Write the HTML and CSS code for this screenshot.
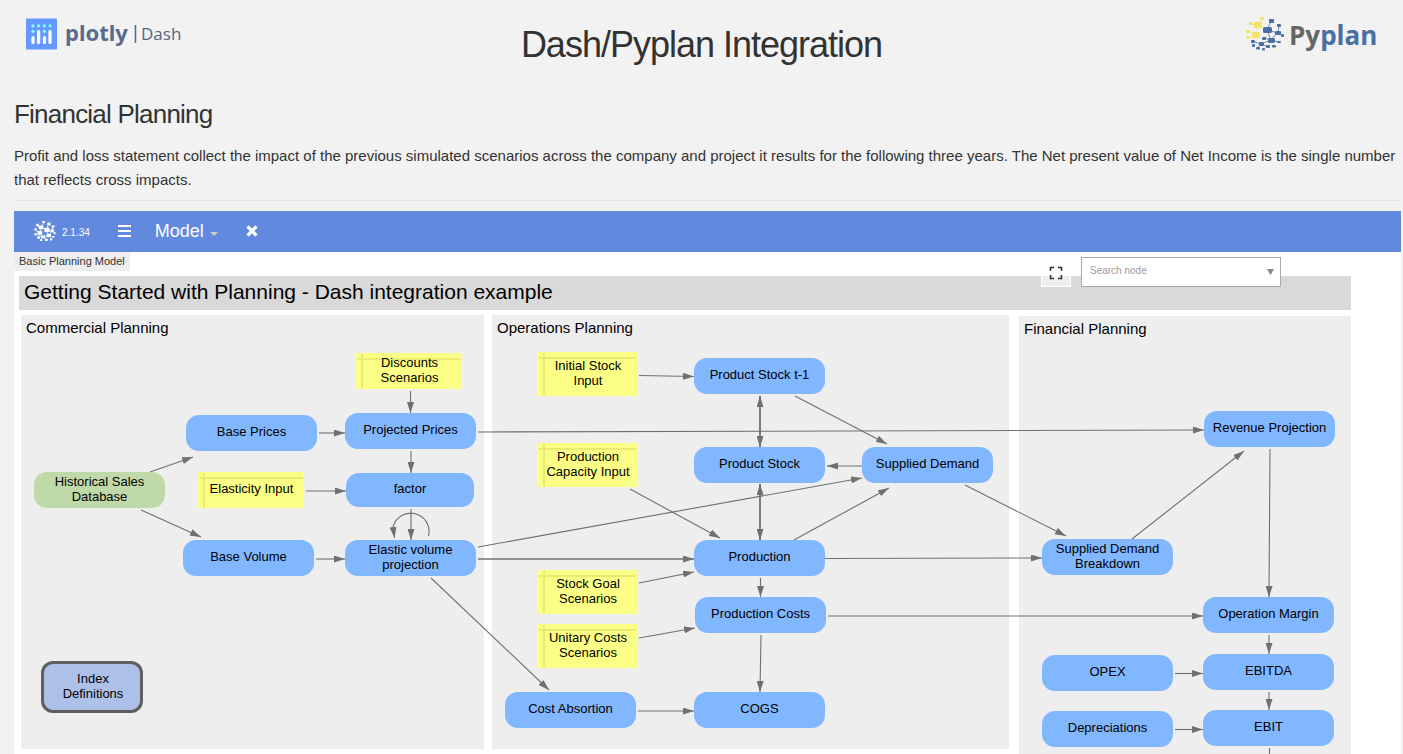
FILE: index.html
```html
<!DOCTYPE html>
<html lang="en">
<head>
<meta charset="utf-8">
<title>Dash/Pyplan Integration</title>
<link rel="stylesheet" href="styles.css">
</head>
<body>
<header class="page-header">
  <svg class="logo-dash" width="160" height="36" viewBox="0 0 160 36" role="img" aria-label="plotly Dash">
    <rect x="0" y="2.500" width="31" height="31" rx="1" fill="#6699ff"/>
    <g fill="#80ffff"><circle cx="7" cy="9.800" r="1.600"/><circle cx="12.600" cy="9.800" r="1.600"/><circle cx="18.400" cy="9.800" r="1.600"/><circle cx="24" cy="9.800" r="1.600"/><circle cx="7" cy="15.300" r="1.600"/><circle cx="18.400" cy="15.300" r="1.600"/></g>
    <g stroke="#fff" stroke-width="3.200" stroke-linecap="round"><path d="M7 21.500v5M12.600 15.500v11M18.400 21.500v5M24 15.500v11"/></g>
    <text class="logo-plotly" x="39" y="25">plotly</text>
    <path d="M109.500 9v18" stroke="#506784" stroke-width="1.500"/>
    <text class="logo-product" x="115" y="24">Dash</text>
  </svg>
  <h1 class="page-title">Dash/Pyplan Integration</h1>
  <svg class="logo-pyplan" width="138" height="40" viewBox="0 0 138 40" role="img" aria-label="Pyplan">
    <g stroke="#4a6fa5" stroke-width=".8" fill="none"><path d="M22 14L26 5M22 14L33 17L34 9M22 14L26 24L32 17L37 19M26 24L16 28L7 25M26 24L34 26M16 28L12 32M16 28L23 31M19 22L26 24"/></g>
    <g stroke="#f2e363" stroke-width=".8" fill="none"><path d="M17 3L13 9L6 8M13 9L11 19L3 15M11 19L3 22M13 9L22 14"/></g>
    <g fill="#f2e363"><rect x="9" y="6" width="8" height="6" rx="1.500"/><rect x="7" y="16" width="8" height="6" rx="1.500"/><rect x="15" y="1" width="4" height="3" rx="1"/><rect x="4" y="6" width="4" height="3" rx="1"/><rect x="1" y="14" width="4" height="3" rx="1"/><rect x="1" y="20" width="4" height="3" rx="1"/></g>
    <g fill="#4a6fa5"><rect x="18" y="11" width="9" height="6" rx="1.500"/><rect x="24" y="3" width="5" height="4" rx="1"/><rect x="32" y="8" width="4" height="3" rx="1"/><rect x="30" y="15" width="6" height="4" rx="1"/><rect x="23" y="22" width="7" height="5" rx="1.500"/><rect x="36" y="18" width="3" height="3" rx="1"/><rect x="17" y="21" width="4" height="3" rx="1"/><rect x="14" y="26" width="5" height="4" rx="1"/><rect x="6" y="24" width="4" height="3" rx="1"/><rect x="7" y="28" width="3" height="3" rx="1"/><rect x="11" y="31" width="4" height="2.500" rx="1"/><rect x="17" y="32" width="3" height="2.500" rx="1"/><rect x="21" y="29" width="4" height="3" rx="1"/><rect x="27" y="29" width="4" height="2.500" rx="1"/><rect x="32" y="25" width="4" height="2" rx="1"/></g>
    <text class="logo-pyplan-text" x="44" y="29" fill="#666">Py<tspan fill="#4a6fa5">plan</tspan></text>
  </svg>
</header>

<main class="content">
  <h2 class="section-title">Financial Planning</h2>
  <p class="intro">Profit and loss statement collect the impact of the previous simulated scenarios across the company and project it results for the following three years. The Net present value of Net Income is the single number that reflects cross impacts.</p>
  <hr class="divider">

  <section class="model">
    <nav class="toolbar">
      <svg class="toolbar-logo" width="22" height="20" viewBox="0 0 38 36" aria-hidden="true">
        <path d="M16 5L12 11L5 10M12 11L10 21L2 17M10 21L2 24M12 11L21 16L25 7M21 16L32 19L33 11M21 16L25 26L31 19L36 21M25 26L15 29L6 27M10 21L15 29L11 34M15 29L22 33" fill="none" stroke="#fff" stroke-width="1.500"/>
        <g fill="#fff"><rect x="8" y="8" width="8" height="7" rx="1"/><rect x="6" y="18" width="8" height="7" rx="1"/><rect x="14" y="0" width="5" height="4"/><rect x="3" y="5" width="5" height="4"/><rect x="0" y="13" width="4" height="4"/><rect x="0" y="22" width="4" height="4"/><rect x="18" y="12" width="9" height="8" rx="1"/><rect x="23" y="3" width="6" height="5"/><rect x="31" y="8" width="5" height="4"/><rect x="29" y="15" width="6" height="5"/><rect x="22" y="23" width="8" height="6"/><rect x="35" y="20" width="3" height="4"/><rect x="13" y="26" width="6" height="5"/><rect x="5" y="28" width="5" height="4"/><rect x="10" y="33" width="4" height="3"/><rect x="19" y="32" width="5" height="4"/><rect x="28" y="31" width="4" height="4"/><rect x="32" y="27" width="4" height="3"/></g>
      </svg>
      <span class="version">2.1.34</span>
      <button class="icon-button menu-button" type="button" aria-label="Menu">
        <svg width="13" height="12" viewBox="0 0 13 12"><path d="M0 1h13M0 6h13M0 11h13" stroke="#fff" stroke-width="2"/></svg>
      </button>
      <button class="model-button" type="button">Model <span class="caret"></span></button>
      <button class="icon-button close-button" type="button" aria-label="Close">
        <svg width="12" height="12" viewBox="0 0 12 12"><path d="M1.500 1.500l9 9M10.500 1.500l-9 9" stroke="#fff" stroke-width="3.200"/></svg>
      </button>
    </nav>

    <div class="canvas">
      <span class="breadcrumb">Basic Planning Model</span>
      <div class="item banner">Getting Started with Planning - Dash integration example</div>
      <div class="item area area-commercial">Commercial Planning</div>
      <div class="item area area-operations">Operations Planning</div>
      <div class="item area area-financial">Financial Planning</div>

      <svg class="edges" width="1387" height="520" aria-hidden="true">
        <defs>
          <marker id="arrow" viewBox="0 0 11 7" markerWidth="11" markerHeight="7" refX="11" refY="3.500" markerUnits="userSpaceOnUse" orient="auto-start-reverse"><path d="M0 0L11 3.500L0 7z" fill="#707070"/></marker>
        </defs>
        <g transform="translate(-14 -252)" fill="none" stroke="#707070" stroke-width="1.100">
          <path marker-end="url(#arrow)" d="M410.500 391V413"/>
          <path marker-end="url(#arrow)" d="M319 433H345"/>
          <path marker-end="url(#arrow)" d="M411 451V473"/>
          <path marker-end="url(#arrow)" d="M306 491H346"/>
          <path marker-end="url(#arrow)" d="M150 472L193 457"/>
          <path marker-end="url(#arrow)" d="M141 510L201 537"/>
          <path marker-end="url(#arrow)" d="M316 559H345"/>
          <path marker-end="url(#arrow)" d="M411 509V540"/>
          <path marker-end="url(#arrow)" d="M428.500 536A18 18 0 1 0 393 527L394.500 538"/>
          <path marker-end="url(#arrow)" d="M478 432L1204 430"/>
          <path marker-end="url(#arrow)" d="M478 547L862 478"/>
          <path marker-end="url(#arrow)" stroke-width="1.600" d="M478 559H694"/>
          <path marker-end="url(#arrow)" d="M431 578L549 690"/>
          <path marker-end="url(#arrow)" d="M639 375.500L694 376.500"/>
          <path marker-end="url(#arrow)" d="M630 489L720 538"/>
          <path marker-end="url(#arrow)" d="M639 583L694 572"/>
          <path marker-end="url(#arrow)" d="M639 638L695 628"/>
          <path marker-end="url(#arrow)" d="M638 711H694"/>
          <path marker-start="url(#arrow)" marker-end="url(#arrow)" stroke-width="1.800" d="M760 396V447"/>
          <path marker-start="url(#arrow)" marker-end="url(#arrow)" stroke-width="1.800" d="M760 484V540"/>
          <path marker-end="url(#arrow)" d="M795 396L887 444"/>
          <path marker-end="url(#arrow)" d="M862 466H827"/>
          <path marker-end="url(#arrow)" d="M794 540L889 488"/>
          <path marker-end="url(#arrow)" d="M760.500 578V597"/>
          <path marker-end="url(#arrow)" d="M761 635L760 692"/>
          <path marker-end="url(#arrow)" d="M825 558.500L1042 558"/>
          <path marker-end="url(#arrow)" d="M828 616H1203"/>
          <path marker-end="url(#arrow)" d="M965 485L1066 536"/>
          <path marker-end="url(#arrow)" d="M1132 539L1244 451"/>
          <path marker-end="url(#arrow)" d="M1270 449L1269 597"/>
          <path marker-end="url(#arrow)" d="M1269 635V654"/>
          <path marker-end="url(#arrow)" d="M1269 692V710"/>
          <path marker-end="url(#arrow)" d="M1175 673.500H1203"/>
          <path marker-end="url(#arrow)" d="M1175 729.500H1203"/>
          <path marker-end="url(#arrow)" d="M1269.500 748V767"/>
        </g>
      </svg>

      <div class="item node source historical-sales">Historical Sales Database</div>
      <div class="item node base-prices">Base Prices</div>
      <div class="item node projected-prices">Projected Prices</div>
      <div class="item node factor">factor</div>
      <div class="item node base-volume">Base Volume</div>
      <div class="item node elastic-volume">Elastic volume projection</div>
      <div class="item node product-stock-prev">Product Stock t-1</div>
      <div class="item node product-stock">Product Stock</div>
      <div class="item node supplied-demand">Supplied Demand</div>
      <div class="item node production">Production</div>
      <div class="item node production-costs">Production Costs</div>
      <div class="item node cost-absortion">Cost Absortion</div>
      <div class="item node cogs">COGS</div>
      <div class="item node demand-breakdown">Supplied Demand Breakdown</div>
      <div class="item node revenue">Revenue Projection</div>
      <div class="item node operation-margin">Operation Margin</div>
      <div class="item node opex">OPEX</div>
      <div class="item node ebitda">EBITDA</div>
      <div class="item node depreciations">Depreciations</div>
      <div class="item node ebit">EBIT</div>
      <div class="item note discounts">Discounts Scenarios</div>
      <div class="item note elasticity">Elasticity Input</div>
      <div class="item note tall initial-stock">Initial Stock Input</div>
      <div class="item note tall capacity">Production Capacity Input</div>
      <div class="item note tall stock-goal">Stock Goal Scenarios</div>
      <div class="item note tall unitary-costs">Unitary Costs Scenarios</div>
      <div class="item index-box">Index Definitions</div>

      <div class="canvas-tools">
        <button class="expand-button" type="button" aria-label="Full screen">
          <svg width="14" height="14" viewBox="0 0 14 14"><path d="M1.500 5V1.500H5M9 1.500h3.500V5M12.500 9v3.500H9M5 12.500H1.500V9" fill="none" stroke="#333" stroke-width="1.500"/></svg>
        </button>
        <div class="search">
          <input class="search-input" type="text" placeholder="Search node" aria-label="Search node">
          <svg class="search-arrow" width="7" height="6" viewBox="0 0 7 6" aria-hidden="true"><path d="M0 0h7L3.500 6z" fill="#888"/></svg>
        </div>
      </div>
    </div>
  </section>
</main>
</body>
</html>
```

FILE: styles.css
```css
* { box-sizing: border-box; }

body {
  margin: 0;
  height: 100vh;
  display: flex;
  flex-direction: column;
  overflow: hidden;
  background: #f2f2f2;
  color: #323232;
  font-family: "Liberation Sans", Arial, sans-serif;
}

button { margin: 0; padding: 0; border: 0; background: none; font: inherit; color: inherit; }
svg { display: block; }

/* Header */
.page-header {
  display: grid;
  grid-template-columns: 1fr auto 1fr;
  align-items: start;
  padding: 16px 20px 0;
  flex: none;
}
.page-title {
  margin: 7px 0 0;
  font-size: 36px;
  line-height: 44px;
  font-weight: 400;
  letter-spacing: -1px;
}
.logo-dash { margin-left: 6px; }
.logo-pyplan { justify-self: end; }
.logo-plotly { font: 700 22px "Noto Sans", sans-serif; fill: #586b8c; }
.logo-product { font: 400 17px "Open Sans", sans-serif; fill: #506784; }
.logo-pyplan-text { font: 700 26px "Open Sans", sans-serif; }

/* Text */
.content {
  flex: 1;
  min-height: 0;
  display: flex;
  flex-direction: column;
  padding: 31px 2px 0 14px;
}
.section-title {
  margin: 0;
  font-size: 26px;
  line-height: 32px;
  font-weight: 400;
  letter-spacing: -0.03em;
}
.intro { margin: 14px 0 0; font-size: 15px; line-height: 24px; }
.divider { width: 100%; margin: 8px 0 10px; border: 0; border-top: 1px solid #e6e6e6; }

/* Model */
.model { flex: 1; min-height: 0; display: flex; flex-direction: column; background: #fff; }
.toolbar {
  flex: none;
  display: flex;
  align-items: center;
  height: 41px;
  padding: 0 20px 1px;
  background: #6189de;
  color: #fff;
}
.version { margin-left: 6px; padding-top: 3px; font-size: 10px; }
.menu-button { margin-left: 28px; }
.model-button { display: flex; align-items: center; gap: 6px; margin-left: 24px; padding-top: 1px; font-size: 18px; }
.caret { margin-top: 5px; border: 4px solid transparent; border-top-color: #ccc; border-bottom: 0; }
.close-button { margin-left: 28px; }

.canvas { position: relative; flex: 1; min-height: 0; overflow: hidden; }
.breadcrumb {
  display: inline-block;
  padding: 0 5px;
  background: #eee;
  font-size: 11px;
  line-height: 19px;
  vertical-align: top;
}

/* Diagram */
.item, .edges { position: absolute; }
.edges { left: 0; top: 0; }
.banner {
  left: 5px; top: 24px; width: 1332px; height: 34px;
  padding-left: 5px;
  background: #d9d9d9;
  color: #000;
  font-size: 21px;
  line-height: 32px;
}
.area { padding: 4px 5px; background: #eee; color: #000; font-size: 15px; line-height: 18px; }
.area-commercial { left: 7px; top: 63px; width: 463px; height: 434px; }
.area-operations { left: 478px; top: 63px; width: 517px; height: 434px; }
.area-financial { left: 1005px; top: 64px; width: 332px; height: 460px; }

.node, .note, .index-box {
  display: flex;
  align-items: center;
  justify-content: center;
  color: #000;
  font-size: 13px;
  line-height: 15px;
  text-align: center;
}
.node {
  width: 131px;
  height: 36px;
  padding: 0 12px 3px;
  border-radius: 13px;
  background: #80b7ff;
}
.source { background: #bfd9a9; }
.note {
  width: 106px;
  height: 36px;
  padding: 0 6px 3px 7px;
  background:
    linear-gradient(#e8eb70, #e8eb70) 1px 5px / calc(100% - 2px) 2px no-repeat,
    linear-gradient(#e8eb70, #e8eb70) 5px 1px / 2px calc(100% - 2px) no-repeat,
    #fcff85;
}
.note.tall { width: 99px; height: 44px; }
.index-box {
  left: 27px; top: 409px; width: 102px; height: 52px;
  padding: 0 12px 2px 14px;
  border: 3px solid #5f5f5f;
  border-radius: 12px;
  background: #adc0e8;
}

.historical-sales { left: 20px; top: 220px; }
.base-prices { left: 172px; top: 163px; }
.projected-prices { left: 331px; top: 161px; }
.factor { left: 332px; top: 221px; width: 128px; height: 34px; }
.base-volume { left: 169px; top: 288px; }
.elastic-volume { left: 331px; top: 288px; }
.product-stock-prev { left: 680px; top: 106px; }
.product-stock { left: 680px; top: 195px; }
.supplied-demand { left: 848px; top: 195px; }
.production { left: 680px; top: 288px; }
.production-costs { left: 681px; top: 345px; }
.cost-absortion { left: 491px; top: 440px; }
.cogs { left: 680px; top: 440px; }
.demand-breakdown { left: 1028px; top: 287px; }
.revenue { left: 1190px; top: 159px; padding: 0 0 3px; }
.operation-margin { left: 1189px; top: 345px; }
.opex { left: 1028px; top: 403px; }
.ebitda { left: 1189px; top: 402px; }
.depreciations { left: 1028px; top: 459px; }
.ebit { left: 1189px; top: 458px; }

.discounts { left: 342px; top: 101px; padding: 0 20px 3px 21px; }
.elasticity { left: 184px; top: 220px; }
.initial-stock { left: 524px; top: 100px; }
.capacity { left: 524px; top: 191px; }
.stock-goal { left: 524px; top: 318px; }
.unitary-costs { left: 524px; top: 372px; }

/* Tools over the diagram */
.canvas-tools {
  position: absolute;
  right: 120px;
  top: 5px;
  display: flex;
  gap: 10px;
}
.expand-button {
  display: flex;
  align-items: center;
  justify-content: center;
  width: 30px;
  height: 30px;
  padding-top: 2px;
  border: 1px solid #fff;
  background: linear-gradient(#fff 18px, #eee 18px);
}
.search { position: relative; width: 200px; }
.search-input {
  display: block;
  width: 100%;
  height: 30px;
  padding: 0 24px 3px 8px;
  border: 1px solid #aaa;
  border-radius: 0;
  background: #fff;
  font: 10px "Liberation Sans", Arial, sans-serif;
}
.search-input::placeholder { color: #999; opacity: 1; }
.search-arrow { position: absolute; right: 7px; top: 12px; }
```
